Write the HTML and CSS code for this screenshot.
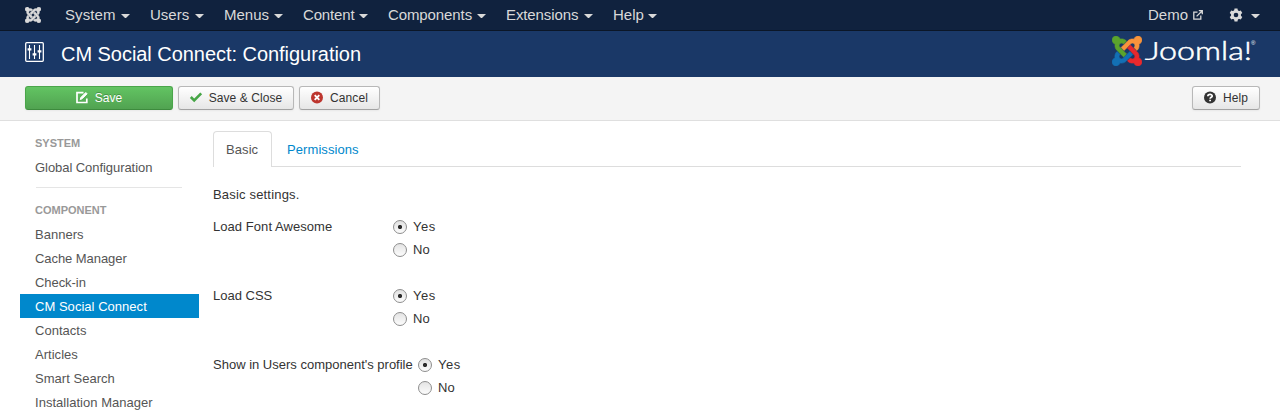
FILE: index.html
```html
<!DOCTYPE html>
<html lang="en">
<head>
<meta charset="utf-8">
<title>CM Social Connect: Configuration</title>
<link rel="stylesheet" href="styles.css">
</head>
<body>
<svg class="defs" width="0" height="0">
  <symbol id="arm" viewBox="0 0 24 24">
    <path d="M16.719 14.759L14.22 17.26l-2.37 2.37-.462.466c-1.368 1.365-3.297 1.83-5.047 1.397-.327 1.424-1.604 2.49-3.13 2.49C1.438 23.983 0 22.547 0 20.772c0-1.518 1.055-2.789 2.469-3.123-.446-1.76.016-3.705 1.396-5.08l.179-.18 2.37 2.37-.184.181c-.769.779-.769 2.024 0 2.789.771.78 2.022.78 2.787 0l.465-.465 2.367-2.371 2.502-2.506z"/>
  </symbol>
</svg>
<nav class="navbar">
  <svg class="brand" viewBox="0 0 24 24" fill="#d9d9d9" stroke="#d9d9d9" stroke-width=".7">
    <use href="#arm" width="24" height="24"/>
    <use href="#arm" width="24" height="24" transform="rotate(90 12 12)"/>
    <use href="#arm" width="24" height="24" transform="rotate(180 12 12)"/>
    <use href="#arm" width="24" height="24" transform="rotate(270 12 12)"/>
  </svg>
  <ul class="menu">
    <li class="m-system"><span>System</span><i class="caret"></i></li>
    <li class="m-users"><span>Users</span><i class="caret"></i></li>
    <li class="m-menus"><span>Menus</span><i class="caret"></i></li>
    <li class="m-content"><span>Content</span><i class="caret"></i></li>
    <li class="m-components"><span>Components</span><i class="caret"></i></li>
    <li class="m-extensions"><span>Extensions</span><i class="caret"></i></li>
    <li class="m-help"><span>Help</span><i class="caret"></i></li>
  </ul>
  <div class="nav-right">
    <span>Demo</span>
    <svg class="external" viewBox="0 0 10 10" fill="none" stroke="#d9d9d9" stroke-width="1.3"><path d="M4.5 2.2H.8v7h7V5.5M3.6 6.4L9 1M5.8.7h3.5v3.5"/></svg>
    <svg class="gear" viewBox="0 0 14 14"><g fill="#d9d9d9"><circle cx="7" cy="7" r="5"/><path id="tooth" d="M5.5.6h3l.5 3H5zM5 10.4h4l-.5 3h-3z"/><use href="#tooth" transform="rotate(60 7 7)"/><use href="#tooth" transform="rotate(120 7 7)"/></g><circle cx="7" cy="7" r="2.3" fill="#10223e"/></svg>
    <i class="caret"></i>
  </div>
</nav>
<header class="header">
  <svg class="sliders" viewBox="0 0 19 20" fill="none" stroke="#fff"><rect x=".7" y=".7" width="17.6" height="18.6" rx="1" stroke-width="1.3"/><path d="M4.5 3v14M9.5 3v14M14.5 3v14" stroke-width="1.1"/><path d="M2.6 7.4h3.8M7.6 12.4h3.8M12.6 9.4h3.8" stroke-width="2.4"/></svg>
  <h1>CM Social Connect: Configuration</h1>
  <svg class="logo" width="144" height="32" viewBox="0 0 144 32">
    <svg x="0" y="0" width="30" height="30" viewBox="0 0 24 24" stroke-width=".5">
      <use href="#arm" width="24" height="24" fill="#1370b5" stroke="#1370b5"/>
      <use href="#arm" width="24" height="24" fill="#f9943b" stroke="#f9943b" transform="rotate(180 12 12)"/>
      <use href="#arm" width="24" height="24" fill="#5ba42d" stroke="#5ba42d" transform="rotate(90 12 12)"/>
      <use href="#arm" width="24" height="24" fill="#e9292d" stroke="#e9292d" transform="rotate(270 12 12)"/>
    </svg>
    <text class="wordmark" y="24"><tspan class="initial" x="32.5" textLength="16" lengthAdjust="spacingAndGlyphs">J</tspan><tspan x="47" textLength="93" lengthAdjust="spacingAndGlyphs">oomla!</tspan></text>
    <text class="reg" x="139" y="9">®</text>
  </svg>
</header>
<div class="toolbar">
  <button class="btn save"><svg class="ic" viewBox="0 0 12 12" fill="none" stroke="#fff"><path d="M7.5 .7H1v9.8h9.8V6.5" stroke-width="1.7"/><path d="M4.2 7.5l.6-2L9.8.5l1.3 1.3-5 5z" stroke-width="1" fill="#fff"/></svg>Save</button>
  <button class="btn close"><svg class="ic" viewBox="0 0 12 12" fill="none" stroke="#46a546" stroke-width="2.6"><path d="M.8 5l3.4 3.4L11.2 1.4"/></svg>Save &amp; Close</button>
  <button class="btn cancel"><svg class="ic" viewBox="0 0 12 12"><circle cx="6" cy="5.5" r="6" fill="#bd362f"/><path d="M3.7 3.2l4.6 4.6M8.3 3.2L3.7 7.8" stroke="#fff" stroke-width="1.9"/></svg>Cancel</button>
  <button class="btn help"><svg class="ic" viewBox="0 0 12 12"><circle cx="6" cy="5.5" r="6" fill="#333"/><path d="M3.8 4.2C3.9 1.8 8.3 1.9 8.2 4.1 8.1 5.4 6.2 5.3 6.1 6.7" fill="none" stroke="#fff" stroke-width="1.7"/><path d="M5.2 7.7h1.8v1.6H5.2z" fill="#fff"/></svg>Help</button>
</div>
<div class="container">
  <aside class="sidebar">
    <h2>SYSTEM</h2>
    <a>Global Configuration</a>
    <div class="divider"></div>
    <h2>COMPONENT</h2>
    <a class="wide">Banners</a>
    <a>Cache Manager</a>
    <a>Check-in</a>
    <a class="active">CM Social Connect</a>
    <a class="wide">Contacts</a>
    <a class="wide">Articles</a>
    <a class="wide">Smart Search</a>
    <a class="wide">Installation Manager</a>
  </aside>
  <main class="main">
    <div class="tabs"><a class="tab current">Basic</a><a class="tab">Permissions</a></div>
    <p class="intro">Basic settings.</p>
    <div class="field"><span class="label wide">Load Font Awesome</span><div class="options"><label><i class="radio on"></i><span class="yes">Yes</span></label><label><i class="radio"></i>No</label></div></div>
    <div class="field"><span class="label">Load CSS</span><div class="options"><label><i class="radio on"></i><span class="yes">Yes</span></label><label><i class="radio"></i>No</label></div></div>
    <div class="field long"><span class="label">Show in Users component's profile</span><div class="options"><label><i class="radio on"></i><span class="yes">Yes</span></label><label><i class="radio"></i>No</label></div></div>
  </main>
</div>
</body>
</html>
```
FILE: styles.css
```css
* { box-sizing: border-box; }
html, body { height: 100%; overflow: hidden; }
body { margin: 0; background: #fff; color: #333; font: 13px/18px "Liberation Sans", Arial, sans-serif; display: flex; flex-direction: column; }
.defs { position: absolute; }
.navbar { flex: none; height: 31px; background: #10223e; border-bottom: 1px solid #0b1627; display: flex; align-items: center; padding: 0 20px 0 25px; color: #d9d9d9; font-size: 15px; }
.brand { width: 16px; height: 16px; margin-right: 24px; overflow: visible; }
.menu { list-style: none; margin: 0; padding: 0; display: flex; }
.menu li { display: flex; align-items: center; }
.menu span { flex: 1; white-space: nowrap; }
.m-system { width: 85px; letter-spacing: .1px; }
.m-users { width: 74px; }
.m-menus { width: 79px; }
.m-content { width: 85px; letter-spacing: -.15px; }
.m-components { width: 118px; letter-spacing: -.1px; }
.m-extensions { width: 107px; letter-spacing: -.1px; }
.m-help { width: 64px; }
.caret { flex: none; width: 9px; border: 4.5px solid transparent; border-top: 4px solid #d9d9d9; border-bottom: 0; margin: 2px 0 0; }
.menu .caret { margin-right: 20px; }
.nav-right { margin-left: auto; display: flex; align-items: center; }
.external { width: 10px; height: 10px; margin-left: 5px; }
.gear { width: 14px; height: 14px; margin: 0 8px 0 26px; }
.header { flex: none; height: 46px; background: #1a3867; color: #fff; display: flex; align-items: center; padding: 0 20px 0 25px; }
.sliders { width: 19px; height: 20px; margin: -5px 17px 0 0; }
.header h1 { font-size: 20px; font-weight: 400; line-height: 24px; letter-spacing: -.04px; margin: 0; white-space: nowrap; }
.logo { margin: -5px 4px 0 auto; overflow: visible; }
.wordmark { font: 300 25px Lato, sans-serif; fill: #fff; stroke: #fff; stroke-width: .5px; }
.initial { stroke-width: .2px; }
.reg { font: 6px "Liberation Sans", sans-serif; fill: #fff; }
.toolbar { flex: none; height: 44px; background: #f4f4f4; border-bottom: 1px solid #dfdfdf; display: flex; gap: 5px; padding: 9px 20px 0 25px; }
.btn { display: flex; align-items: center; justify-content: center; height: 24px; padding: 0; border: 1px solid #b8b8b8; border-bottom-color: #a2a2a2; border-radius: 3px; background: linear-gradient(#fff, #e6e6e6); box-shadow: 0 1px 2px rgba(0,0,0,.05); color: #333; font: 12px/18px "Liberation Sans", Arial, sans-serif; white-space: nowrap; letter-spacing: .08px; }
.ic { width: 12px; height: 12px; margin-right: 7px; overflow: visible; }
.save { width: 148px; color: #fff; background: linear-gradient(#62c462, #51a351); border-color: #4aa54a #4aa54a #3d8b3d; text-shadow: 0 -1px 0 rgba(0,0,0,.25); }
.close { width: 116px; }
.cancel { width: 81px; }
.help { width: 68px; margin-left: auto; }
.container { display: flex; padding-left: 20px; }
.sidebar { width: 179px; flex: none; padding-top: 13px; }
.sidebar h2 { margin: 0; padding: 0 15px; font-size: 11px; line-height: 18px; color: #999; }
.sidebar a { display: block; padding: 4px 15px 2px; line-height: 18px; color: #555; white-space: nowrap; letter-spacing: -.06px; }
.sidebar h2 + a { margin-top: 3px; }
.sidebar .active { background: #08c; color: #fff; letter-spacing: .03px; }
.sidebar .wide { letter-spacing: .03px; }
.divider { height: 1px; background: #e5e5e5; margin: 8px 17px 13px 16px; }
.main { flex: none; width: 1028px; margin-left: 14px; padding-top: 10px; }
.tabs { height: 36px; border-bottom: 1px solid #ddd; display: flex; gap: 2px; }
.tab { height: 36px; padding: 10px 13px; line-height: 18px; color: #08c; letter-spacing: .08px; }
.current { width: 59px; padding: 9px 12px; color: #555; background: #fff; border: 1px solid #ddd; border-bottom: 0; border-radius: 4px 4px 0 0; }
.intro { margin: 19px 0 14px; letter-spacing: .18px; }
.field { display: flex; height: 69px; white-space: nowrap; }
.label { min-width: 180px; }
.label.wide { letter-spacing: .06px; }
.long .label { width: 205px; }
.options label { display: flex; align-items: center; height: 18px; margin-bottom: 5px; }
.yes { letter-spacing: .5px; }
.radio { width: 14px; height: 14px; margin-right: 6px; border: 1px solid #8e8e8e; border-radius: 50%; background: linear-gradient(#e4e4e4, #fcfcfc); }
.radio.on { background: radial-gradient(circle, #2c2c2c 0 1.8px, transparent 2.4px), linear-gradient(#e0e0e0, #fcfcfc); }
```
